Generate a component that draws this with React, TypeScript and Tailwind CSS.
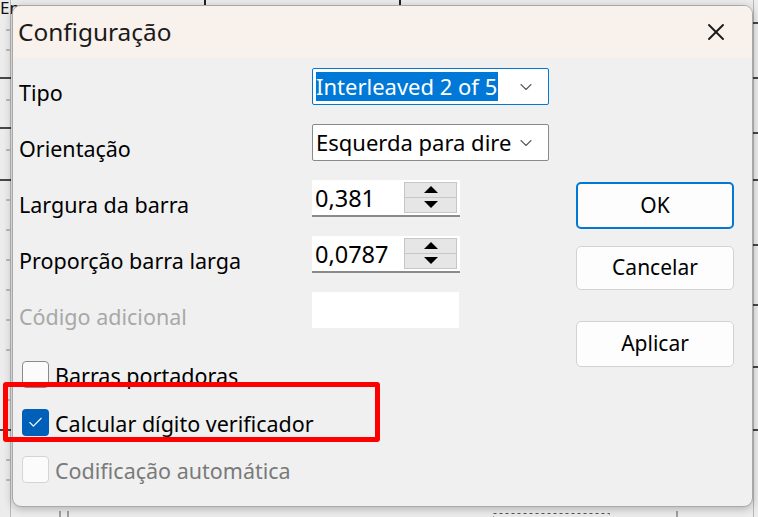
import { Check, ChevronDown, X } from "lucide-react";

const font = { fontFamily: '"Noto Sans", "Open Sans", sans-serif' };

function Spinner({ value }: { value: string }) {
  return (
    <div className="flex h-[37px] w-[148px] items-center justify-between border-b-2 border-[#8a8a8a] bg-white pl-[3px] pr-[3px]">
      <span className="mt-[2px] text-[23.5px] text-black">{value}</span>
      <div className="flex h-[31px] w-[53px] flex-col">
        <div className="flex flex-1 items-end justify-center border border-[#c6c6c6] bg-[#e6e6e6] pb-[3px]">
          <svg width="14" height="8" viewBox="0 0 14 8">
            <path d="M7 0 L14 7 L0 7 Z" fill="#000" />
          </svg>
        </div>
        <div className="flex flex-1 items-start justify-center border border-t-0 border-[#c6c6c6] bg-[#e6e6e6] pt-[3px]">
          <svg width="14" height="8" viewBox="0 0 14 8">
            <path d="M0 0 L14 0 L7 7 Z" fill="#000" />
          </svg>
        </div>
      </div>
    </div>
  );
}

function Row({ label, disabled, children }: { label: string; disabled?: boolean; children: React.ReactNode }) {
  return (
    <div className="flex h-[56px] items-start">
      <span className={`mt-[9px] w-[293px] text-[21.5px] ${disabled ? "text-[#a8a8a8]" : "text-black"}`}>{label}</span>
      {children}
    </div>
  );
}

function Box({ state }: { state: "off" | "on" | "disabled" }) {
  if (state === "on") {
    return (
      <div className="flex h-[27px] w-[27px] shrink-0 items-center justify-center rounded-[4px] bg-[#005fb8]">
        <Check size={17} strokeWidth={1.6} color="#fff" />
      </div>
    );
  }
  return (
    <div
      className={`h-[27px] w-[27px] shrink-0 rounded-[4px] border-[1.5px] bg-[#fbfbfb] ${
        state === "disabled" ? "border-[#d4d4d4]" : "border-[#8a8a8a]"
      }`}
    />
  );
}

function CheckRow({ label, state }: { label: string; state: "off" | "on" | "disabled" }) {
  return (
    <div className="flex h-[47.5px] items-start gap-[6px]">
      <Box state={state} />
      <span className={`-mt-[1px] text-[21.5px] ${state === "disabled" ? "text-[#7a7a7a]" : "text-black"}`}>{label}</span>
    </div>
  );
}

function Button({ label, primary, h }: { label: string; primary?: boolean; h: string }) {
  return (
    <div
      className={`flex w-[158px] items-center justify-center rounded-[5px] bg-[#fdfdfd] text-[21px] text-black ${h} ${
        primary ? "border-2 border-[#0078d4]" : "border border-[#d2d2d2]"
      }`}
    >
      {label}
    </div>
  );
}

function Ruler() {
  const blackLeft = [78, 128, 180, 430];
  const blackRight = [23, 78, 133, 180, 245, 305, 367, 430];
  const greyLeft = [30, 50, 100, 150, 200, 230, 260, 290, 320, 350, 400, 460, 480];
  return (
    <svg className="absolute inset-0" width="758" height="517">
      <line x1="10.5" y1="0" x2="10.5" y2="517" stroke="#b8b8b8" />
      <line x1="753.5" y1="0" x2="753.5" y2="517" stroke="#b8b8b8" />
      <line x1="205" y1="0" x2="205" y2="6" stroke="#222" strokeWidth="2" />
      <line x1="400" y1="0" x2="400" y2="6" stroke="#222" strokeWidth="2" />
      {blackLeft.map((y) => (
        <line key={"bl" + y} x1="0" y1={y} x2="11" y2={y} stroke="#111" strokeWidth="1.5" />
      ))}
      {greyLeft.map((y) => (
        <line key={"gl" + y} x1="6" y1={y} x2="10" y2={y} stroke="#888" />
      ))}
      {blackRight.map((y) => (
        <line key={"br" + y} x1="752" y1={y} x2="758" y2={y} stroke="#111" strokeWidth="1.5" />
      ))}
      <line x1="60" y1="511" x2="60" y2="517" stroke="#555" />
      <line x1="68" y1="511" x2="68" y2="517" stroke="#555" />
      <line x1="677" y1="511" x2="677" y2="517" stroke="#555" />
      <rect x="493.5" y="513.5" width="116" height="10" fill="none" stroke="#555" strokeDasharray="3 3" />
      <text x="0" y="14" fontSize="17" fill="#111" style={font}>Em</text>
    </svg>
  );
}

export default function App() {
  return (
    <div className="relative h-[517px] w-[758px] overflow-hidden bg-[#ececec]" style={font}>
      <Ruler />

      {/* dialog window */}
      <div className="absolute left-[12px] top-[5px] flex h-[502px] w-[741px] flex-col overflow-hidden rounded-[9px] border border-[#a9a9a9] bg-[#f0f0f0] shadow-[0_2px_8px_rgba(0,0,0,0.25)]">
        <div className="flex h-[52px] shrink-0 items-center justify-between bg-[#f8f1ec] pl-[5px] pr-[22px]">
          <span className="text-[24.4px] text-[#1a1a1a]">Configuração</span>
          <X size={28} strokeWidth={1.6} color="#1a1a1a" />
        </div>

        <div className="flex flex-1 pl-[6px] pt-[10px]">
          <div className="flex w-[538px] flex-col">
            <Row label="Tipo">
              <div className="flex h-[37px] w-[237px] items-center justify-between rounded-[2px] border-[1.5px] border-[#0078d4] bg-white pl-[3px] pr-[12px]">
                <span className="whitespace-nowrap bg-[#0078d7] pr-[1px] text-[22px] leading-[29px] text-white">Interleaved 2 of 5</span>
                <ChevronDown size={20} strokeWidth={1.4} color="#606060" className="shrink-0" />
              </div>
            </Row>
            <Row label="Orientação">
              <div className="flex h-[37px] w-[237px] items-center justify-between overflow-hidden rounded-[2px] border-[1.5px] border-[#8a8a8a] bg-white pl-[3px] pr-[12px]">
                <span className="whitespace-nowrap text-[22px] text-black">Esquerda para dire</span>
                <ChevronDown size={20} strokeWidth={1.4} color="#606060" className="shrink-0" />
              </div>
            </Row>
            <Row label="Largura da barra">
              <Spinner value="0,381" />
            </Row>
            <Row label="Proporção barra larga">
              <Spinner value="0,0787" />
            </Row>
            <Row label="Código adicional" disabled>
              <div className="h-[36px] w-[147px] bg-white" />
            </Row>

            <div className="mt-[13px] flex flex-col pl-[3px]">
              <CheckRow label="Barras portadoras" state="off" />
              <CheckRow label="Calcular dígito verificador" state="on" />
              <CheckRow label="Codificação automática" state="disabled" />
            </div>
          </div>

          <div className="ml-[19px] flex flex-col pt-[114px]">
            <Button label="OK" primary h="h-[47px]" />
            <div className="h-[17px]" />
            <Button label="Cancelar" h="h-[44px]" />
            <div className="h-[31px]" />
            <Button label="Aplicar" h="h-[46px]" />
          </div>
        </div>
      </div>

      {/* red highlight annotation */}
      <div className="absolute left-[3px] top-[382px] h-[60px] w-[377px] rounded-[3px] border-[5px] border-[#ff0000]" />
    </div>
  );
}
